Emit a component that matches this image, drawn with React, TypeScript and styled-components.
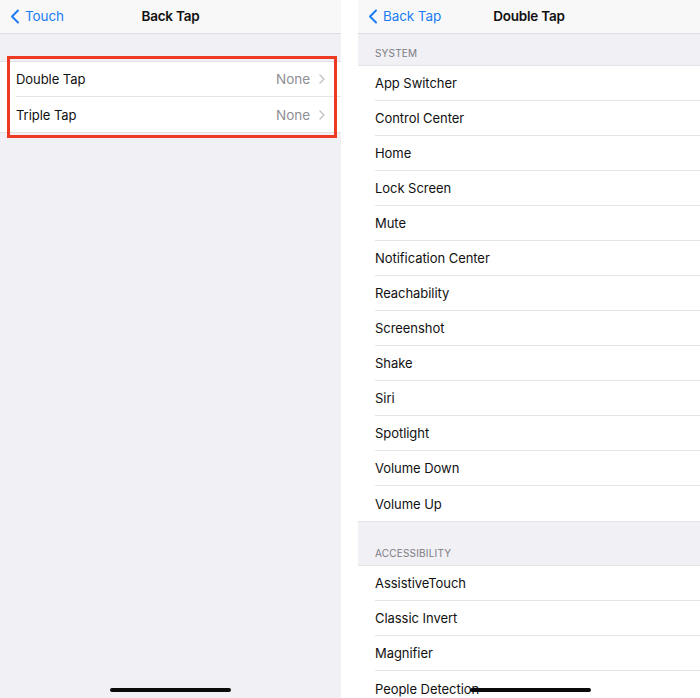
import styled, { createGlobalStyle } from "styled-components"

const GlobalStyle = createGlobalStyle`
  html, body {
    margin: 0;
    padding: 0;
    background: #ffffff;
  }
  body {
    font-family: Inter, "Noto Sans", "Liberation Sans", sans-serif;
    -webkit-font-smoothing: antialiased;
  }
`

const Page = styled.div`
  display: flex;
  gap: 17px;
  width: 700px;
  height: 698px;
  overflow: hidden;
  background: #ffffff;
`

const Screen = styled.div<{ $width: number }>`
  position: relative;
  display: flex;
  flex-direction: column;
  width: ${(p) => p.$width}px;
  flex-shrink: 0;
  height: 698px;
  overflow: hidden;
  background: #f0f0f5;
`

const NavBar = styled.div`
  display: grid;
  grid-template-columns: 1fr auto 1fr;
  align-items: center;
  height: 34px;
  padding-bottom: 1px;
  flex-shrink: 0;
  background: #f8f8f9;
  border-bottom: 1px solid #dedee2;
  box-sizing: border-box;
`

const BackButton = styled.div`
  display: flex;
  align-items: center;
  gap: 5px;
  padding-left: 10px;
  color: #1b7cf4;
  font-size: 13.5px;
  letter-spacing: -0.1px;
`

const NavTitle = styled.div`
  font-size: 13.5px;
  font-weight: 600;
  color: #111111;
  letter-spacing: -0.2px;
`

const Spacer = styled.div<{ $h: number }>`
  height: ${(p) => p.$h}px;
  flex-shrink: 0;
`

const SectionHeader = styled.div<{ $h: number }>`
  display: flex;
  align-items: flex-end;
  height: ${(p) => p.$h}px;
  padding: 0 0 6px 17px;
  box-sizing: border-box;
  flex-shrink: 0;
  font-size: 10px;
  color: #7c7c82;
  letter-spacing: 0.2px;
`

const Group = styled.div`
  background: #ffffff;
  border-top: 1px solid #e4e4e8;
  border-bottom: 1px solid #e4e4e8;
  flex-shrink: 0;
`

const Row = styled.div<{ $inset: number }>`
  display: flex;
  align-items: center;
  height: 35px;
  margin-left: ${(p) => p.$inset}px;
  padding-right: 16px;
  box-sizing: border-box;
  border-bottom: 1px solid #e6e6ea;
  font-size: 13px;
  color: #111111;
  letter-spacing: -0.05px;

  &:last-child {
    border-bottom: none;
  }
`

const Label = styled.span`
  flex: 1;
`

const Value = styled.span`
  display: flex;
  align-items: center;
  gap: 9px;
  color: #8e8e93;
  font-size: 13.5px;
`

const Highlight = styled.div`
  position: absolute;
  left: 7px;
  top: 56px;
  width: 330px;
  height: 82px;
  border: 3px solid #ee3a22;
  box-sizing: border-box;
  pointer-events: none;
`

const HomeIndicator = styled.div<{ $left: number }>`
  position: absolute;
  left: ${(p) => p.$left}px;
  bottom: 6px;
  width: 121px;
  height: 4px;
  border-radius: 2px;
  background: #0a0a0a;
`

const BackChevron = () => (
  <svg width="10" height="15" viewBox="0 0 10 15">
    <path d="M8 1.5 L2 7.5 L8 13.5" fill="none" stroke="#1b7cf4" strokeWidth="2" strokeLinecap="round" strokeLinejoin="round" />
  </svg>
)

const Disclosure = () => (
  <svg width="6" height="10" viewBox="0 0 6 10">
    <path d="M1 1 L5 5 L1 9" fill="none" stroke="#c3c3c8" strokeWidth="1.4" strokeLinecap="round" strokeLinejoin="round" />
  </svg>
)

const Nav = ({ back, title }: { back: string; title: string }) => (
  <NavBar>
    <BackButton>
      <BackChevron />
      {back}
    </BackButton>
    <NavTitle>{title}</NavTitle>
    <div />
  </NavBar>
)

const systemActions = [
  "App Switcher",
  "Control Center",
  "Home",
  "Lock Screen",
  "Mute",
  "Notification Center",
  "Reachability",
  "Screenshot",
  "Shake",
  "Siri",
  "Spotlight",
  "Volume Down",
  "Volume Up",
]

const accessibilityActions = ["AssistiveTouch", "Classic Invert", "Magnifier", "People Detection"]

const App = () => {
  return (
    <>
      <GlobalStyle />
      <Page>
        <Screen $width={341}>
          <Nav back="Touch" title="Back Tap" />
          <Spacer $h={27} />
          <Group>
            {["Double Tap", "Triple Tap"].map((item) => (
              <Row key={item} $inset={16}>
                <Label>{item}</Label>
                <Value>
                  None
                  <Disclosure />
                </Value>
              </Row>
            ))}
          </Group>
          <Highlight />
          <HomeIndicator $left={110} />
        </Screen>

        <Screen $width={342}>
          <Nav back="Back Tap" title="Double Tap" />
          <SectionHeader $h={31}>SYSTEM</SectionHeader>
          <Group>
            {systemActions.map((item) => (
              <Row key={item} $inset={17}>
                <Label>{item}</Label>
              </Row>
            ))}
          </Group>
          <SectionHeader $h={43}>ACCESSIBILITY</SectionHeader>
          <Group>
            {accessibilityActions.map((item) => (
              <Row key={item} $inset={17}>
                <Label>{item}</Label>
              </Row>
            ))}
          </Group>
          <HomeIndicator $left={112} />
        </Screen>
      </Page>
    </>
  )
}

export default App
